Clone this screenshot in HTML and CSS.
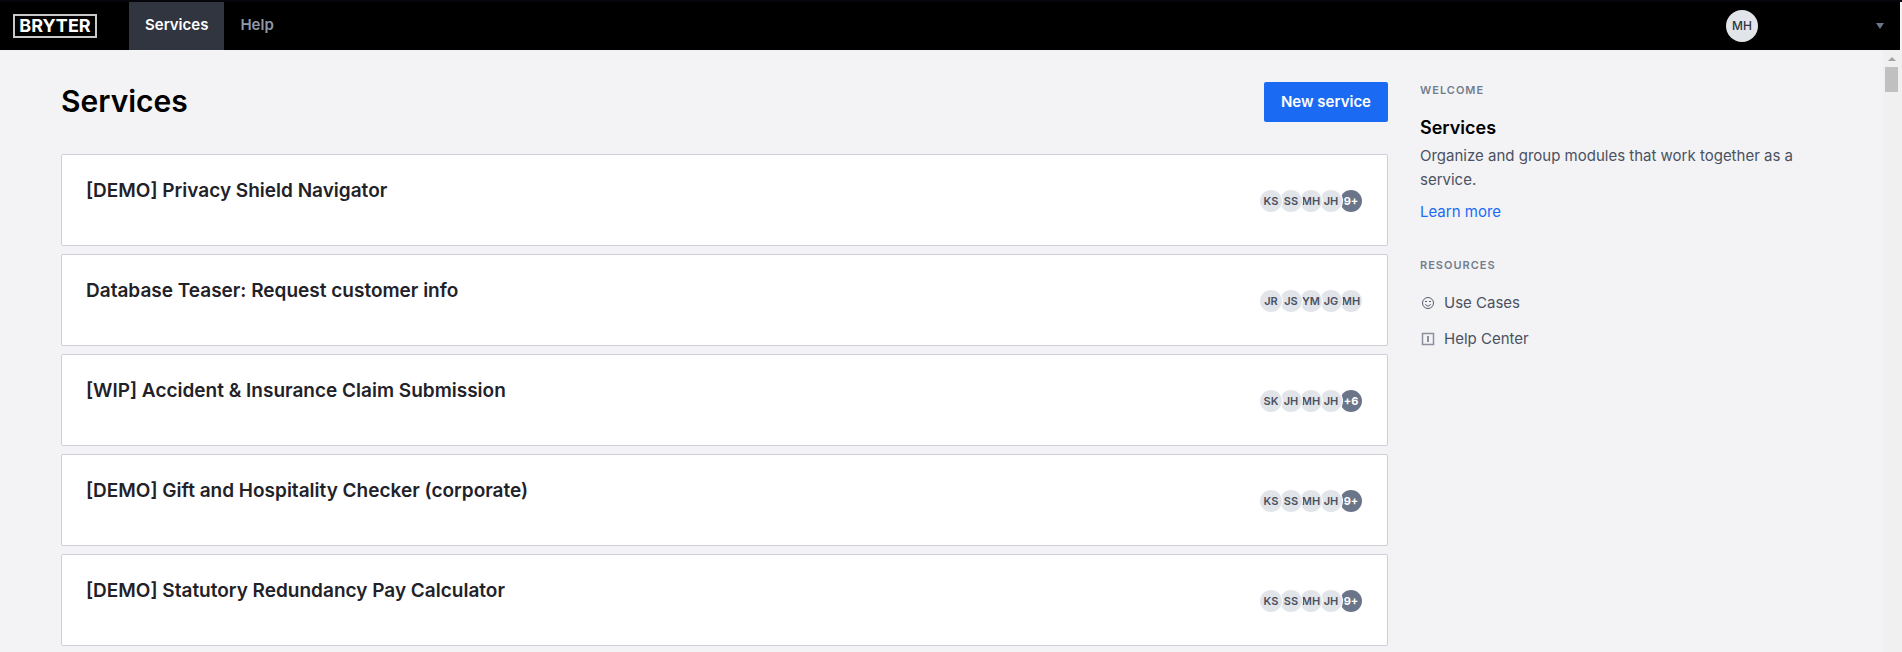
FILE: index.html
```html
<!DOCTYPE html>
<html lang="en">
<head>
  <meta charset="UTF-8">
  <meta name="viewport" content="width=device-width, initial-scale=1.0">
  <title>Services</title>
  <link rel="stylesheet" href="styles.css">
</head>
<body>
  <header class="topbar">
    <a class="logo" href="#">BRYTER</a>
    <nav class="nav">
      <a class="nav-link active" href="#">Services</a>
      <a class="nav-link" href="#">Help</a>
    </nav>
    <button class="account" type="button" aria-label="Account menu">
      <span class="account-avatar">MH</span>
      <svg class="caret" width="8" height="6" viewBox="0 0 8 6"><path d="M0 0h8L4 6z" fill="#6b7589"/></svg>
    </button>
  </header>

  <div class="page">
    <div class="content">
      <main class="services">
        <div class="services-head">
          <h1>Services</h1>
          <button class="btn-primary" type="button">New service</button>
        </div>

        <ul class="cards">
          <li class="card">
            <h2>[DEMO] Privacy Shield Navigator</h2>
            <div class="avatars"><span>KS</span><span>SS</span><span>MH</span><span>JH</span><span class="more">9+</span></div>
          </li>
          <li class="card">
            <h2>Database Teaser: Request customer info</h2>
            <div class="avatars"><span>JR</span><span>JS</span><span>YM</span><span>JG</span><span>MH</span></div>
          </li>
          <li class="card">
            <h2>[WIP] Accident &amp; Insurance Claim Submission</h2>
            <div class="avatars"><span>SK</span><span>JH</span><span>MH</span><span>JH</span><span class="more">+6</span></div>
          </li>
          <li class="card">
            <h2>[DEMO] Gift and Hospitality Checker (corporate)</h2>
            <div class="avatars"><span>KS</span><span>SS</span><span>MH</span><span>JH</span><span class="more">9+</span></div>
          </li>
          <li class="card">
            <h2>[DEMO] Statutory Redundancy Pay Calculator</h2>
            <div class="avatars"><span>KS</span><span>SS</span><span>MH</span><span>JH</span><span class="more">9+</span></div>
          </li>
        </ul>
      </main>

      <aside class="sidebar">
        <h3 class="label">WELCOME</h3>
        <h2 class="sidebar-title">Services</h2>
        <p>Organize and group modules that work together as a service.</p>
        <a class="learn-more" href="#">Learn more</a>

        <h3 class="label">RESOURCES</h3>
        <ul class="resources">
          <li>
            <a href="#">
              <svg width="16" height="16" viewBox="0 0 16 16" fill="none" stroke="#565e6e">
                <circle cx="8" cy="8" r="5.5"/>
                <path d="M5 6.5h2M9 6.5h2M5.5 9c.3 1.3 1.2 2 2.5 2s2.200-.7 2.5-2"/>
              </svg>
              Use Cases
            </a>
          </li>
          <li>
            <a href="#">
              <svg width="16" height="16" viewBox="0 0 16 16" fill="none" stroke="#8b909c">
                <rect x="2.5" y="2.5" width="11" height="11" stroke-width="1.5"/>
                <path d="M8 5v6" stroke-width="2"/>
              </svg>
              Help Center
            </a>
          </li>
        </ul>
      </aside>
    </div>

    <div class="scrollbar" aria-hidden="true">
      <svg width="8" height="4" viewBox="0 0 8 4"><path d="M0 4h8L4 0z" fill="#a3a3a3"/></svg>
      <div class="thumb"></div>
    </div>
  </div>
</body>
</html>
```
FILE: styles.css
```css
* {
  box-sizing: border-box;
}
body {
  margin: 0;
  height: 100vh;
  display: flex;
  flex-direction: column;
  border-top: 2px solid #05060c;
  font-family: Inter, "Liberation Sans", sans-serif;
  font-size: 15px;
  line-height: 24px;
  color: #4a5160;
  background-color: #f3f3f6;
}
h1, h2, h3, p, ul {
  margin: 0;
  padding: 0;
}
ul {
  list-style: none;
}
a {
  color: inherit;
  text-decoration: none;
}
button {
  font-family: inherit;
  border: none;
  cursor: pointer;
}

/* Top bar */
.topbar {
  display: flex;
  align-items: center;
  flex-shrink: 0;
  margin-right: 2px;
  padding: 0 16px 0 13px;
  background-color: #000;
}
.logo {
  width: 84px;
  height: 24px;
  border: 2px solid #c9c9c9;
  color: #fff;
  font-size: 18px;
  font-weight: 700;
  line-height: 20px;
  text-align: center;
}
.nav {
  display: flex;
  margin-left: 32px;
}
.nav-link {
  padding: 11px 16px 13px;
  color: #8f99aa;
  font-weight: 600;
}
.nav-link.active {
  color: #fff;
  background-color: #31353f;
}
.account {
  display: flex;
  align-items: center;
  justify-content: space-between;
  width: 158px;
  margin-left: auto;
  padding: 0;
  background: none;
}
.account-avatar {
  width: 32px;
  border-radius: 50%;
  background-color: #e1e4e9;
  color: #31353f;
  font-size: 12px;
  font-weight: 500;
  line-height: 32px;
}

/* Page */
.page {
  display: flex;
  flex: 1;
  min-height: 0;
}
.content {
  display: flex;
  flex: 1;
  gap: 32px;
  align-items: flex-start;
  height: 100%;
  padding: 32px 61px 0;
  overflow-y: auto;
  scrollbar-width: none;
}
.services {
  flex: 1;
}
.services-head {
  display: flex;
  justify-content: space-between;
  margin-bottom: 32px;
}
h1 {
  color: #000;
  font-size: 30px;
  font-weight: 600;
  line-height: 38px;
}
.btn-primary {
  height: 40px;
  padding: 0 17px 2px;
  border-radius: 2px;
  background-color: #1a6af4;
  color: #fff;
  font-size: 15px;
  font-weight: 600;
}
.cards {
  display: grid;
  gap: 8px;
}
.card {
  display: flex;
  justify-content: space-between;
  height: 92px;
  padding: 24px 25px 22px 24px;
  border: 1px solid #cbcfd7;
  border-radius: 2px;
  background-color: #fff;
}
.card h2 {
  color: #1f2229;
  font-size: 19px;
  font-weight: 600;
  line-height: 24px;
}

/* Overlapping avatars, the first one on top */
.avatars {
  display: flex;
  align-items: center;
}
.avatars span {
  width: 22px;
  border-radius: 50%;
  box-shadow: 0 0 0 1px #fff;
  background-color: #e1e4e9;
  color: #4a5160;
  font-size: 11px;
  font-weight: 600;
  line-height: 22px;
  text-align: center;
}
.avatars span + span {
  margin-left: -2px;
}
.avatars span:nth-child(1) { z-index: 5; }
.avatars span:nth-child(2) { z-index: 4; }
.avatars span:nth-child(3) { z-index: 3; }
.avatars span:nth-child(4) { z-index: 2; }
.avatars span:nth-child(5) { z-index: 1; }
.avatars .more {
  background-color: #6b7589;
  color: #fff;
  font-weight: 700;
}

/* Sidebar */
.sidebar {
  width: 402px;
}
.label {
  color: #727d8d;
  font-size: 11px;
  font-weight: 600;
  line-height: 16px;
  letter-spacing: 1px;
}
.sidebar-title {
  margin: 18px 0 4px;
  color: #000;
  font-size: 18px;
  font-weight: 600;
  line-height: 24px;
}
.learn-more {
  display: block;
  margin: 8px 0 33px;
  color: #1a6af4;
}
.resources {
  display: grid;
  gap: 12px;
  margin-top: 18px;
}
.resources a {
  display: flex;
  align-items: center;
  gap: 8px;
}

/* Scrollbar */
.scrollbar {
  width: 19px;
  padding: 7px 4px 0 2px;
  background-color: #f0f0f0;
}
.scrollbar svg {
  display: block;
  margin: 0 auto;
}
.thumb {
  height: 25px;
  margin-top: 6px;
  background-color: #c0c0c0;
}
```
